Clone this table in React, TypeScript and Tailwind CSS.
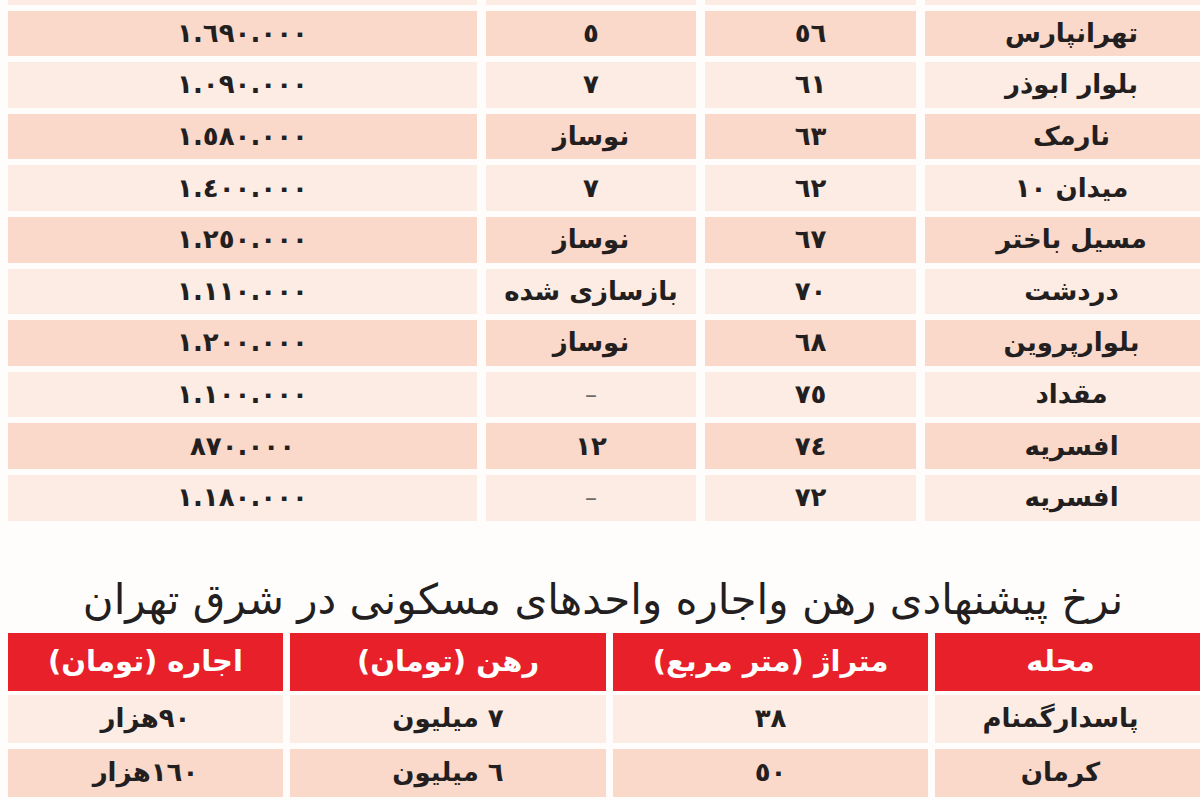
import React from "react";

type Row = [string, string, string, string];

const topRows: Row[] = [
  ["بلوار دماوند", "", "نوساز", ""],
  ["تهرانپارس", "٥٦", "٥", "١.٦٩٠.٠٠٠"],
  ["بلوار ابوذر", "٦١", "٧", "١.٠٩٠.٠٠٠"],
  ["نارمک", "٦٣", "نوساز", "١.٥٨٠.٠٠٠"],
  ["میدان ١٠", "٦٢", "٧", "١.٤٠٠.٠٠٠"],
  ["مسیل باختر", "٦٧", "نوساز", "١.٢٥٠.٠٠٠"],
  ["دردشت", "٧٠", "بازسازی شده", "١.١١٠.٠٠٠"],
  ["بلوارپروین", "٦٨", "نوساز", "١.٢٠٠.٠٠٠"],
  ["مقداد", "٧٥", "–", "١.١٠٠.٠٠٠"],
  ["افسریه", "٧٤", "١٢", "٨٧٠.٠٠٠"],
  ["افسریه", "٧٢", "–", "١.١٨٠.٠٠٠"],
];

const bottomHead: Row = ["محله", "متراژ (متر مربع)", "رهن (تومان)", "اجاره (تومان)"];

const bottomRows: Row[] = [
  ["پاسدارگمنام", "٣٨", "٧ میلیون", "٩٠هزار"],
  ["کرمان", "٥٠", "٦ میلیون", "١٦٠هزار"],
];

const font = { fontFamily: '"DejaVu Sans", sans-serif' };

function Cell({ text, bg, pad }: { text: string; bg: string; pad?: string }) {
  const dash = text === "–";
  return (
    <div
      className={`${bg} flex items-center justify-center ${
        dash ? "text-[24px] font-normal text-[#6b6b6b]" : "text-[26px] font-bold text-[#231f20]"
      } ${pad ?? ""}`}
    >
      {text}
    </div>
  );
}

export default function App() {
  return (
    <div className="w-[1200px] h-[800px] overflow-hidden bg-[#fffdfb]" style={font}>
      <div className="w-[1210px] ml-[8px] flex flex-col gap-[6px]">
        {topRows.map((row, r) => (
          <div
            key={r}
            dir="rtl"
            className={`grid grid-cols-[293px_211px_210px_1fr] gap-x-[9px] h-[45.6px] ${r === 0 ? "-mt-[41px]" : ""}`}
          >
            {row.map((cell, i) => (
              <Cell key={i} text={cell} bg={r % 2 === 1 ? "bg-[#fad8ca]" : "bg-[#fdece4]"} />
            ))}
          </div>
        ))}
      </div>

      <div className="h-[112px] flex justify-center pt-[50px] pl-[6px]">
        <h1 dir="rtl" className="text-[42px] leading-[58px] font-normal text-[#231f20]">
          نرخ پیشنهادی رهن واجاره واحدهای مسکونی در شرق تهران
        </h1>
      </div>

      <div className="w-[1210px] ml-[8px] flex flex-col">
        <div dir="rtl" className="grid grid-cols-[283px_315px_316px_1fr] gap-x-[7px] h-[58px]">
          {bottomHead.map((cell, i) => (
            <div
              key={i}
              className={`bg-[#e8202a] flex items-center justify-center text-[29px] font-bold text-white ${
                i === 0 ? "pr-[32px]" : ""
              }`}
            >
              {cell}
            </div>
          ))}
        </div>
        <div className="flex flex-col gap-[6px] mt-[4px]">
          {bottomRows.map((row, r) => (
            <div key={r} dir="rtl" className="grid grid-cols-[283px_315px_316px_1fr] gap-x-[7px] h-[48px]">
              {row.map((cell, i) => (
                <Cell
                  key={i}
                  text={cell}
                  bg={r === 0 ? "bg-[#fdece4]" : "bg-[#fad8ca]"}
                  pad={i === 0 ? "pr-[32px]" : ""}
                />
              ))}
            </div>
          ))}
        </div>
      </div>
    </div>
  );
}
